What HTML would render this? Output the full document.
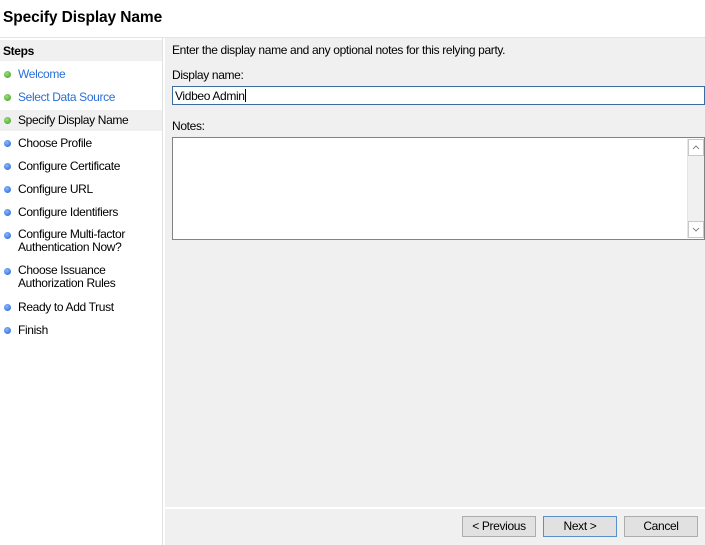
<!DOCTYPE html>
<html><head><style>
*{margin:0;padding:0;box-sizing:border-box}
body{width:705px;height:545px;overflow:hidden;background:#fff;font-family:"Liberation Sans",sans-serif;font-size:12px;color:#000;position:relative;letter-spacing:-0.35px}
.a{position:absolute;white-space:nowrap}
.dot{position:absolute;left:4px;width:7px;height:7px;border-radius:50%}
.g{background:radial-gradient(circle at 40% 35%,#9be07a,#3c9a1c)}
.b{background:radial-gradient(circle at 40% 35%,#8ab8ff,#1f5fcf)}
.btn{position:absolute;top:516px;width:74px;height:21px;border:1px solid #adadad;background:#e1e1e1;text-align:center;line-height:19px}
</style></head><body>
<div class="a" style="left:3px;top:9px;font-size:15.5px;font-weight:bold;letter-spacing:-0.1px">Specify Display Name</div>
<div class="a" style="left:0;top:37px;width:705px;height:1px;background:#e4e4e4"></div>
<div class="a" style="left:0;top:40px;width:162px;height:21px;background:#f0f0f0"></div>
<div class="a" style="left:3px;top:44px;font-weight:bold">Steps</div>
<div class="a" style="left:162px;top:38px;width:1px;height:507px;background:#e2e2e2"></div>
<div class="a" style="left:165px;top:38px;width:540px;height:507px;background:#f0f0f0"></div>
<div class="a" style="left:165px;top:507px;width:540px;height:2px;background:#fff"></div>
<div class="a" style="left:0;top:110px;width:162px;height:21px;background:#f0f0f0"></div>

<div class="dot g" style="top:71px"></div><div class="a" style="left:18px;top:67px;color:#2a6fd6">Welcome</div>
<div class="dot g" style="top:94px"></div><div class="a" style="left:18px;top:90px;color:#2a6fd6">Select Data Source</div>
<div class="dot g" style="top:117px"></div><div class="a" style="left:18px;top:113px">Specify Display Name</div>
<div class="dot b" style="top:140px"></div><div class="a" style="left:18px;top:136px">Choose Profile</div>
<div class="dot b" style="top:163px"></div><div class="a" style="left:18px;top:159px">Configure Certificate</div>
<div class="dot b" style="top:186px"></div><div class="a" style="left:18px;top:182px">Configure URL</div>
<div class="dot b" style="top:209px"></div><div class="a" style="left:18px;top:205px">Configure Identifiers</div>
<div class="dot b" style="top:232px"></div><div class="a" style="left:18px;top:228px;line-height:13px">Configure Multi-factor<br>Authentication Now?</div>
<div class="dot b" style="top:268px"></div><div class="a" style="left:18px;top:264px;line-height:13px">Choose Issuance<br>Authorization Rules</div>
<div class="dot b" style="top:304px"></div><div class="a" style="left:18px;top:300px">Ready to Add Trust</div>
<div class="dot b" style="top:327px"></div><div class="a" style="left:18px;top:323px">Finish</div>

<div class="a" style="left:172px;top:43px">Enter the display name and any optional notes for this relying party.</div>
<div class="a" style="left:172px;top:68px">Display name:</div>
<div class="a" style="left:172px;top:86px;width:533px;height:19px;background:#fff;border:1px solid #3b6e9e;padding:2px 0 0 2px">Vidbeo Admin<span style="display:inline-block;width:1px;height:13px;background:#000;vertical-align:-2px"></span></div>
<div class="a" style="left:172px;top:119px">Notes:</div>
<div class="a" style="left:172px;top:137px;width:533px;height:103px;background:#fff;border:1px solid #828282"></div>
<div class="a" style="left:687px;top:139px;width:17px;height:99px;background:#f0f0f0;border-left:1px solid #e4e4e4"></div>
<div class="a" style="left:688px;top:139px;width:16px;height:17px;border:1px solid #c8c8c8;background:#fff"><svg width="14" height="15" style="position:absolute;left:0;top:0"><path d="M4 9 L7 6 L10 9" fill="none" stroke="#888" stroke-width="1"/></svg></div>
<div class="a" style="left:688px;top:221px;width:16px;height:17px;border:1px solid #c8c8c8;background:#fff"><svg width="14" height="15" style="position:absolute;left:0;top:0"><path d="M4 6 L7 9 L10 6" fill="none" stroke="#888" stroke-width="1"/></svg></div>

<div class="btn" style="left:462px">&lt; Previous</div>
<div class="btn" style="left:543px;border-color:#5a8fc9">Next &gt;</div>
<div class="btn" style="left:624px">Cancel</div>
</body></html>
